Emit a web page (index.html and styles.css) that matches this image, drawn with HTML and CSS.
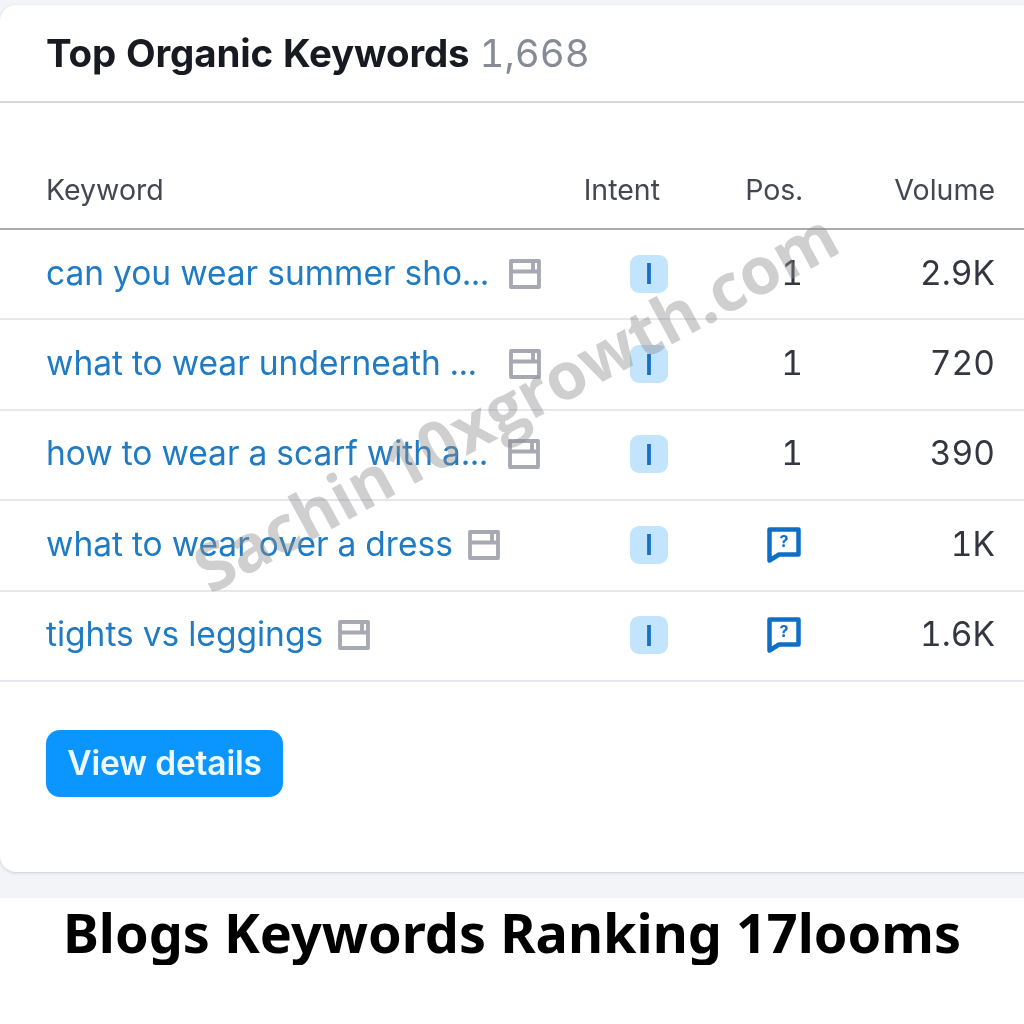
FILE: index.html
```html
<!DOCTYPE html>
<html lang="en">
<head>
    <meta charset="UTF-8">
    <meta name="viewport" content="width=device-width, initial-scale=1.0">
    <title>Blogs Keywords Ranking 17looms</title>
    <link rel="stylesheet" href="styles.css">
</head>
<body>
    <svg class="icon-defs" width="0" height="0">
        <symbol id="serp" viewBox="0 0 32 30">
            <path d="M2 2h28v26H2zM2 12.500h28M24 3v8" fill="none" stroke="currentColor" stroke-width="3.800" stroke-linejoin="round"/>
        </symbol>
        <symbol id="question" viewBox="0 0 34 36">
            <path d="M2.500 2.500h29v25H12L2.500 33.500z" fill="none" stroke="currentColor" stroke-width="4.500" stroke-linejoin="round"/>
            <text x="17" y="20" text-anchor="middle" class="question-mark">?</text>
        </symbol>
    </svg>

    <div class="screen">
        <section class="card">
            <header class="card-header">
                <h2 class="card-title">Top Organic Keywords <span class="count">1,668</span></h2>
            </header>

            <div class="row head">
                <div>Keyword</div>
                <div class="intent-head">Intent</div>
                <div class="num">Pos.</div>
                <div class="num">Volume</div>
            </div>

            <div class="row">
                <div class="kw"><a href="#" class="cut">can you wear summer sho...</a><svg class="serp"><use href="#serp"/></svg></div>
                <div class="intent"><span class="badge">I</span></div>
                <div class="num">1</div>
                <div class="num">2.9K</div>
            </div>
            <div class="row">
                <div class="kw"><a href="#" class="gap-wide">what to wear underneath ...</a><svg class="serp"><use href="#serp"/></svg></div>
                <div class="intent"><span class="badge">I</span></div>
                <div class="num">1</div>
                <div class="num">720</div>
            </div>
            <div class="row">
                <div class="kw"><a href="#" class="cut">how to wear a scarf with a...</a><svg class="serp"><use href="#serp"/></svg></div>
                <div class="intent"><span class="badge">I</span></div>
                <div class="num">1</div>
                <div class="num">390</div>
            </div>
            <div class="row">
                <div class="kw"><a href="#">what to wear over a dress</a><svg class="serp"><use href="#serp"/></svg></div>
                <div class="intent"><span class="badge">I</span></div>
                <div class="num"><svg class="question"><use href="#question"/></svg></div>
                <div class="num">1K</div>
            </div>
            <div class="row">
                <div class="kw"><a href="#">tights vs leggings</a><svg class="serp"><use href="#serp"/></svg></div>
                <div class="intent"><span class="badge">I</span></div>
                <div class="num"><svg class="question"><use href="#question"/></svg></div>
                <div class="num">1.6K</div>
            </div>

            <div class="card-footer">
                <button class="details-btn">View details</button>
            </div>
        </section>

        <div class="watermark">Sachin10xgrowth.com</div>
    </div>

    <p class="caption">Blogs Keywords Ranking 17looms</p>
</body>
</html>
```

FILE: styles.css
```css
/* Page */
body {
    margin: 0;
    background-color: #fff;
    font-family: 'Inter', 'Liberation Sans', sans-serif;
    font-variant-numeric: tabular-nums;
    color: #333;
}

.icon-defs {
    display: none;
}

.screen {
    position: relative;
    height: 898px;
    padding-top: 5px;
    box-sizing: border-box;
    background-color: #f3f4f7;
    overflow: hidden;
}

/* Card */
.card {
    width: 1044px;
    height: 867px;
    box-sizing: border-box;
    background-color: #fff;
    border-radius: 16px;
    box-shadow: 0 1px 3px rgba(80, 90, 120, 0.25);
    filter: blur(0.4px);
}

.card-header {
    height: 98px;
    padding-left: 46px;
    box-sizing: border-box;
    border-bottom: 2px solid #d5d6de;
}

.card-title {
    margin: 0;
    padding-top: 26px;
    font-size: 38.5px;
    line-height: 44px;
    font-weight: 700;
    letter-spacing: -0.2px;
    color: #181a22;
}

.count {
    font-weight: 400;
    letter-spacing: 0;
    color: #868a94;
}

/* Table */
.row {
    display: grid;
    grid-template-columns: 1fr 60px 135px 192px;
    align-items: center;
    height: 90.4px;
    padding: 0 49px 3px 46px;
    border-bottom: 2px solid #e6e6ec;
    box-sizing: border-box;
    font-size: 33.5px;
    color: #333640;
}

.row.head {
    height: 127px;
    padding-top: 48px;
    padding-bottom: 0;
    border-bottom-color: #a9abb2;
    font-size: 28.5px;
    color: #44474f;
}

.kw {
    display: flex;
    align-items: center;
    white-space: nowrap;
}

.kw a {
    color: #1f7cc4;
    text-decoration: none;
}

.kw a.cut {
    margin-right: 5px;
}

.kw a.gap-wide {
    margin-right: 17px;
}

.serp {
    width: 32px;
    height: 30px;
    margin: 2px 0 0 15px;
    color: #a6a8b2;
}

.intent-head {
    justify-self: end;
    margin-right: 8px;
    white-space: nowrap;
}

.intent {
    justify-self: end;
    margin-top: 2px;
}

.badge {
    display: flex;
    align-items: center;
    justify-content: center;
    width: 38px;
    height: 38px;
    border-radius: 9px;
    background-color: #c2e4fd;
    color: #1a6fc0;
    font-size: 29px;
    font-weight: 600;
}

.num {
    text-align: right;
}

.question {
    display: block;
    width: 34px;
    height: 36px;
    margin: 2px 2px 0 auto;
    color: #0f6fc6;
}

.question-mark {
    font-family: 'Inter', sans-serif;
    font-size: 16px;
    font-weight: 700;
    fill: #0f6fc6;
}

/* Footer */
.card-footer {
    padding: 48px 0 0 46px;
}

.details-btn {
    width: 237px;
    height: 67px;
    border: none;
    border-radius: 14px;
    background-color: #0a95ff;
    color: #eef8ff;
    font-family: inherit;
    font-size: 33.5px;
    font-weight: 600;
    letter-spacing: -0.2px;
}

/* Watermark */
.watermark {
    position: absolute;
    left: 155px;
    top: 351px;
    font-family: 'Open Sans', sans-serif;
    font-size: 65.5px;
    font-weight: 700;
    line-height: 100px;
    white-space: nowrap;
    color: rgba(140, 140, 140, 0.42);
    transform: rotate(-28.500deg);
}

/* Caption */
.caption {
    margin: 0;
    padding-top: 1px;
    font-family: 'Noto Sans', sans-serif;
    font-size: 54px;
    line-height: 66px;
    font-weight: 700;
    text-align: center;
    color: #000;
}
```
